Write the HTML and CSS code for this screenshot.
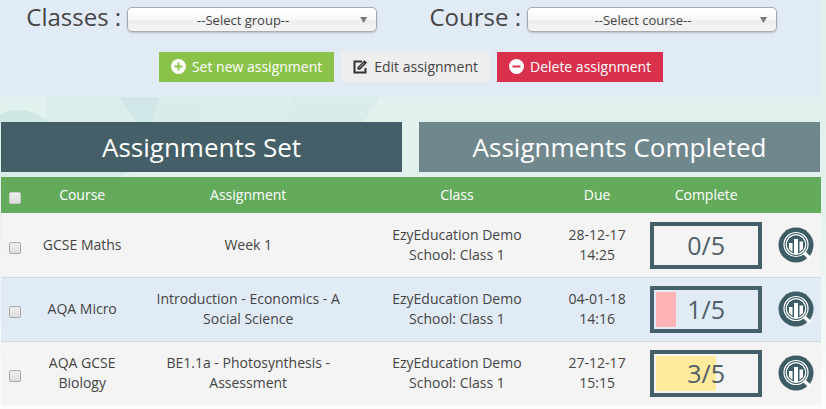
FILE: index.html
```html
<!DOCTYPE html>
<html lang="en">
<head>
  <meta charset="UTF-8" />
  <meta name="viewport" content="width=device-width, initial-scale=1" />
  <title>Assignments</title>
  <link rel="stylesheet" href="styles.css">
</head>
<body>
  <svg class="backdrop" viewBox="0 0 826 409" preserveAspectRatio="none" aria-hidden="true">
    <path d="M0 97h46v25H0z" fill="#e0f1ee" />
    <path d="M46 97h246l-6 25H46z" fill="#dceeec" />
    <path d="M0 114q18-8 36 0l14 8H0z" fill="#cfe6e2" />
    <path d="M118 97h42l-9 25h-14z" fill="#d0e6e7" />
    <path d="M160 97h50l-10 25h-49z" fill="#d8ecea" />
    <path d="M292 97h88l-16 25h-78z" fill="#d9ecea" />
    <path d="M0 172h130l-12 5H0z" fill="#d8ece9" />
  </svg>

  <form class="panel">
    <div class="filters">
      <div class="filter">
        <label for="group">Classes :</label>
        <div class="select">
          <select id="group"><option>--Select group--</option></select>
        </div>
      </div>
      <div class="filter">
        <label for="course">Course :</label>
        <div class="select">
          <select id="course"><option>--Select course--</option></select>
        </div>
      </div>
    </div>
    <div class="actions">
      <button type="button" class="btn btn-add">
        <svg width="15" height="15" viewBox="0 0 15 15">
          <circle cx="7.5" cy="7.5" r="7.5" fill="#fff" />
          <path d="M7.5 3.5v8M3.5 7.5h8" stroke="#8bc34a" stroke-width="2" />
        </svg>
        Set new assignment
      </button>
      <button type="button" class="btn btn-edit">
        <svg width="15" height="15" viewBox="0 0 15 15">
          <path d="M9 2.5H1.5v11h11V9" fill="none" stroke="#333" stroke-width="2" />
          <path d="M4.5 8.2l7-7 2.5 2.5-7 7H4.5z" fill="#333" />
          <path d="M6.5 8.7L11 4.200" stroke="#eee" stroke-width=".7" />
        </svg>
        Edit assignment
      </button>
      <button type="button" class="btn btn-delete">
        <svg width="15" height="15" viewBox="0 0 15 15">
          <circle cx="7.5" cy="7.5" r="7.5" fill="#fff" />
          <path d="M3.5 7.5h8" stroke="#d9304c" stroke-width="2" />
        </svg>
        Delete assignment
      </button>
    </div>
  </form>

  <div class="tabs">
    <button type="button" class="tab active">Assignments Set</button>
    <button type="button" class="tab">Assignments Completed</button>
  </div>

  <svg width="0" height="0" class="defs" aria-hidden="true">
    <symbol id="report" viewBox="0 0 36 36">
      <circle cx="18" cy="18" r="17.5" fill="#3c5d65" />
      <circle cx="18" cy="17.5" r="12" fill="none" stroke="#fff" stroke-width="1.2" />
      <circle cx="18" cy="17.5" r="9.8" fill="none" stroke="#fff" stroke-width="1.3" />
      <path d="M11 16h3.5v9L11 22zM16 12h4v15h-4zM21.5 14.500H25V22l-3.500 3z" fill="#fff" />
      <path d="M26 25.500l6 6" stroke="#fff" stroke-width="3.500" />
    </symbol>
  </svg>

  <table class="assignments">
    <colgroup>
      <col class="col-check"><col class="col-course"><col class="col-name"><col class="col-class">
      <col class="col-due"><col class="col-complete"><col class="col-report">
    </colgroup>
    <thead>
      <tr>
        <th><input type="checkbox" aria-label="Select all"></th>
        <th>Course</th>
        <th>Assignment</th>
        <th>Class</th>
        <th>Due</th>
        <th>Complete</th>
        <th></th>
      </tr>
    </thead>
    <tbody>
      <tr>
        <td><input type="checkbox" aria-label="Select Week 1"></td>
        <td>GCSE Maths</td>
        <td>Week 1</td>
        <td>EzyEducation Demo School: Class 1</td>
        <td>28-12-17 14:25</td>
        <td><div class="progress"><div class="bar" style="width: 0%"></div><span>0/5</span></div></td>
        <td><a href="#" aria-label="Report"><svg class="report"><use href="#report" /></svg></a></td>
      </tr>
      <tr>
        <td><input type="checkbox" aria-label="Select Introduction"></td>
        <td>AQA Micro</td>
        <td>Introduction - Economics - A Social Science</td>
        <td>EzyEducation Demo School: Class 1</td>
        <td>04-01-18 14:16</td>
        <td><div class="progress"><div class="bar low" style="width: 20%"></div><span>1/5</span></div></td>
        <td><a href="#" aria-label="Report"><svg class="report"><use href="#report" /></svg></a></td>
      </tr>
      <tr>
        <td><input type="checkbox" aria-label="Select Photosynthesis"></td>
        <td>AQA GCSE Biology</td>
        <td>BE1.1a - Photosynthesis - Assessment</td>
        <td>EzyEducation Demo School: Class 1</td>
        <td>27-12-17 15:15</td>
        <td><div class="progress"><div class="bar mid" style="width: 60%"></div><span>3/5</span></div></td>
        <td><a href="#" aria-label="Report"><svg class="report"><use href="#report" /></svg></a></td>
      </tr>
    </tbody>
  </table>
</body>
</html>
```
FILE: styles.css
```css
* {
  box-sizing: border-box;
}

body {
  margin: 0;
  padding: 0 5px 0 1px;
  font-family: "Open Sans", sans-serif;
  font-size: 14px;
  line-height: 20px;
  color: #444;
  background: linear-gradient(#e2f1ee, #e4f2ee 50%, #fafdfc) no-repeat #fafdfc;
}

button, select {
  font-family: inherit;
}

/* faceted shapes behind the page */
.backdrop {
  position: absolute;
  top: 0;
  left: 0;
  width: 100%;
  height: 409px;
  z-index: -1;
}

.defs { position: absolute }

.panel {
  padding: 7px 0 15px;
  background: #e1ebf6;
}

.filters {
  display: grid;
  grid-template-columns: 1fr 1fr;
  padding-right: 17px;
}

.filter {
  display: flex;
  justify-content: center;
  align-items: center;
  gap: 6px;
  height: 25px;
}

.filter label {
  font-size: 24px;
  line-height: 24px;
  padding-bottom: 6px;
}

.select {
  position: relative;
  width: 250px;
}

.select select {
  display: block;
  appearance: none;
  width: 100%;
  height: 25px;
  padding: 0 18px 0 0;
  border: 1px solid #aaa;
  border-radius: 5px;
  background: linear-gradient(#fff 20%, #f6f6f6 50%, #eee 52%, #f4f4f4);
  box-shadow: 0 1px 2px #0003;
  font-size: 13px;
  color: #444;
  text-align: center;
  text-align-last: center;
}

.select::after {
  content: '';
  position: absolute;
  right: 10px;
  top: 10px;
  width: 7px;
  height: 6px;
  background: #777;
  clip-path: polygon(0 0, 100% 0, 50% 100%);
  pointer-events: none;
}

.actions {
  display: flex;
  justify-content: center;
  gap: 7px;
  margin-top: 20px;
}

.btn {
  display: flex;
  align-items: center;
  gap: 6px;
  height: 30px;
  padding: 0 12px 2px;
  border: 0;
  font-size: 14px;
  color: #fff;
}

.btn-add { background: #8bc34a }
.btn-edit { background: #eee; color: #444 }
.btn-delete { background: #d9304c }

.tabs {
  display: grid;
  grid-template-columns: 1fr 1fr;
  gap: 17px;
  margin: 25px 1px 5px 0;
}

.tab {
  height: 50px;
  padding: 0;
  border: 0;
  background: #70888d;
  font-size: 26px;
  color: #fff;
}

.tab.active { background: #455f68 }

.assignments {
  width: 100%;
  table-layout: fixed;
  border-collapse: collapse;
  text-align: center;
}

.col-check { width: 3.4% }
.col-course { width: 13% }
.col-name { width: 27.5% }
.col-class { width: 23.4% }
.col-due { width: 10.8% }
.col-complete { width: 15.8% }
.col-report { width: 6.1% }

th {
  height: 36px;
  padding: 0 5px;
  background: #63aa5b;
  font-weight: normal;
  color: #fff;
}

td {
  height: 64px;
  padding: 0 8px;
  border-top: 1px solid #cfdbe4;
  background: #f4f4f4;
}

tbody tr:first-child td { border-top-color: #f4f4f4 }
tbody tr:nth-child(even) td { background: #e1ebf6 }

th:first-child, td:first-child { padding: 0 }
td:last-child { padding: 0 }

input[type=checkbox] {
  appearance: none;
  display: block;
  width: 12px;
  height: 12px;
  margin: 6px auto 0;
  border: 1px solid #aaa;
  border-radius: 2px;
  background: linear-gradient(#eee, #ddd);
}

th input[type=checkbox] { border-color: #ccc }

.progress {
  position: relative;
  width: 112px;
  height: 47px;
  margin: 0 auto;
  padding: 2px;
  border: 4px solid #455f6b;
}

.bar { height: 100% }
.low { background: #ffb3b5 }
.mid { background: #ffe99b }

.progress span {
  position: absolute;
  inset: 0;
  font-size: 25px;
  line-height: 38px;
  color: #4f6069;
}

.report {
  display: block;
  width: 36px;
  height: 36px;
  margin: 0 auto;
}
```
